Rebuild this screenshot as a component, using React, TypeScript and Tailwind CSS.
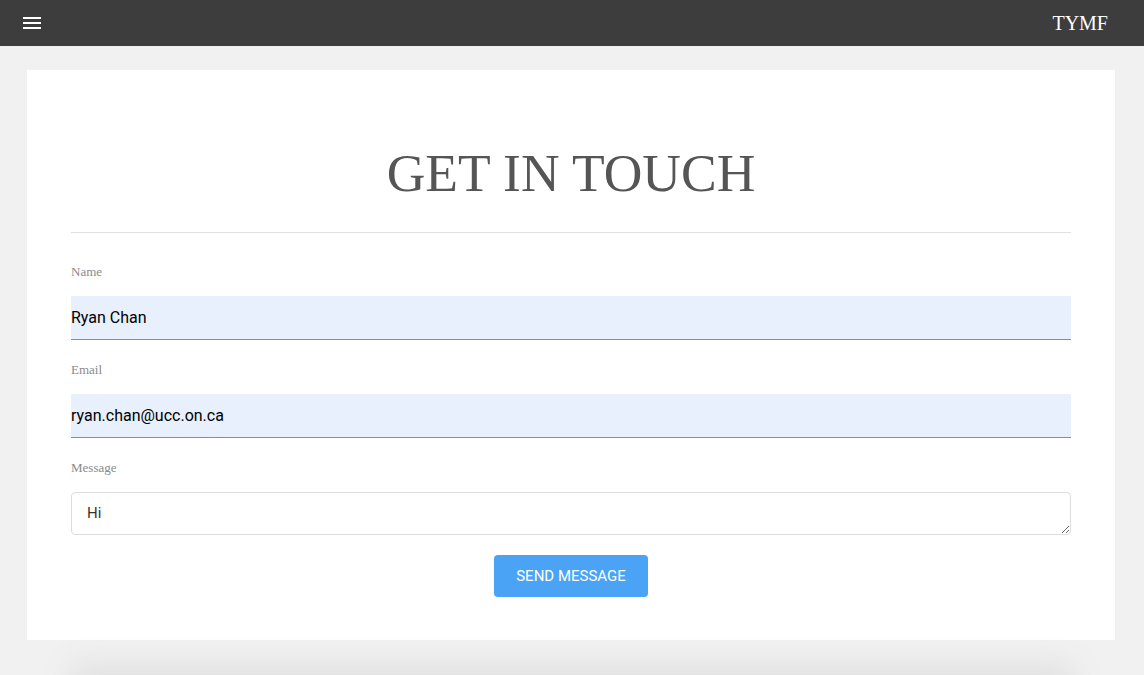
import React from "react";

export default function App() {
  return (
    <div className="h-[675px] overflow-hidden bg-[#f1f1f1]">
      {/* Top bar */}
      <header className="h-[46px] bg-[#3d3d3d] flex items-center justify-between pl-[23px] pr-[36px]">
        <button aria-label="Menu" className="flex flex-col gap-[3px]">
          <span className="block w-[18px] h-[2px] bg-white" />
          <span className="block w-[18px] h-[2px] bg-white" />
          <span className="block w-[18px] h-[2px] bg-white" />
        </button>
        <span className="text-white text-[20px] font-['Liberation_Serif',serif]">TYMF</span>
      </header>

      {/* Contact card */}
      <main className="ml-[27px] w-[1088px] mt-[24px] bg-white px-[44px] pt-[72px] pb-[43px]">
        <h1 className="text-center text-[#555] text-[53.5px] leading-[62px] font-['Liberation_Serif',serif]">
          GET IN TOUCH
        </h1>
        <div className="mt-[28px] border-t border-[#e0e0e0]" />

        <form className="mt-[31px] flex flex-col font-['Liberation_Serif',serif]">
          <label className="text-[13px] leading-[16px] text-[#8a8a8a]">Name</label>
          <input
            defaultValue="Ryan Chan"
            className="mt-[16px] h-[44px] bg-[#e8f0fe] border-b border-[#8a8d99] outline-none text-[16px] text-black font-['Roboto',sans-serif]"
          />
          <label className="mt-[22px] text-[13px] leading-[16px] text-[#8a8a8a]">Email</label>
          <input
            defaultValue="ryan.chan@ucc.on.ca"
            className="mt-[16px] h-[44px] bg-[#e8f0fe] border-b border-[#8a8d99] outline-none text-[16px] text-black font-['Roboto',sans-serif]"
          />
          <label className="mt-[22px] text-[13px] leading-[16px] text-[#8a8a8a]">Message</label>
          <textarea
            defaultValue="Hi"
            rows={1}
            className="mt-[16px] h-[43px] border border-[#ddd] rounded-[4px] px-[15px] py-[10px] text-[15px] leading-[20px] text-[#333] outline-none font-['Roboto',sans-serif]"
          />
          <div className="mt-[20px] flex justify-center">
            <button
              type="button"
              className="w-[154px] h-[42px] rounded-[4px] bg-[#4aa3f5] text-white text-[15px] font-['Roboto',sans-serif]"
            >
              SEND MESSAGE
            </button>
          </div>
        </form>
      </main>

      {/* Shadow of the next block below the fold */}
      <div className="mx-[90px] mt-[45px] h-[60px] bg-[#e0e0e0] shadow-[0_0_30px_20px_#e0e0e0]" />
    </div>
  );
}
